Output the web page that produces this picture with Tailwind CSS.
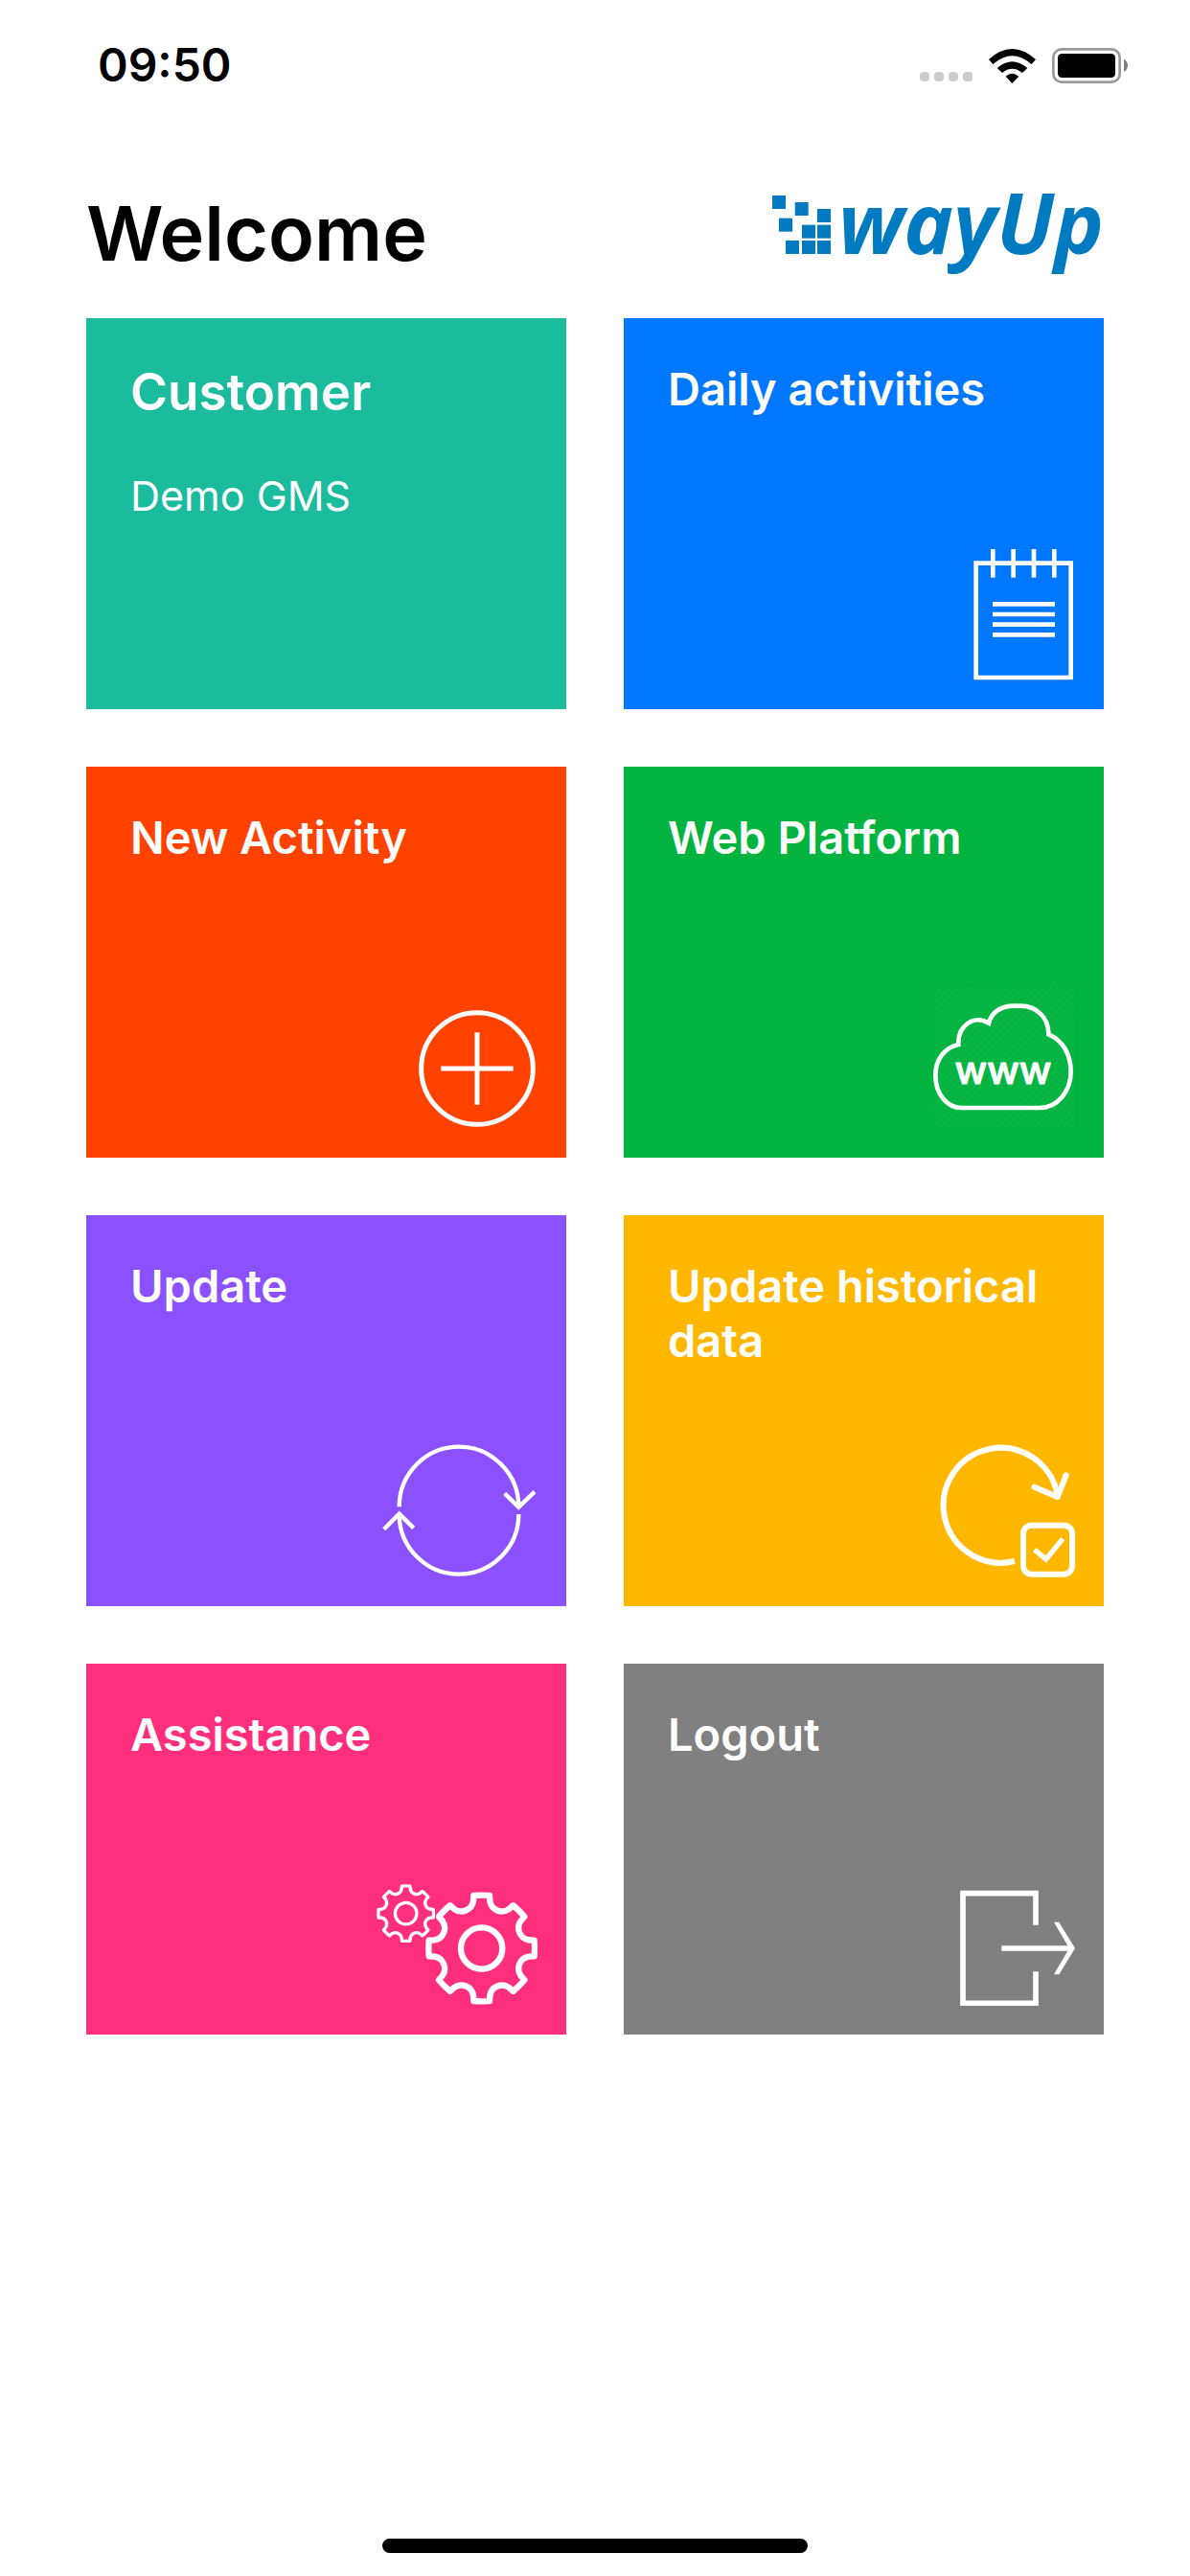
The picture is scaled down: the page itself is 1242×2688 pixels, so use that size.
<!DOCTYPE html>
<html lang="en">

<head>
    <meta charset="UTF-8">
    <meta name="viewport" content="width=device-width, initial-scale=1.0">
    <title>wayUp</title>
    <script src="https://cdn.jsdelivr.net/npm/@tailwindcss/browser@4"></script>
</head>

<body class="bg-white text-black font-['Inter',sans-serif] min-h-screen flex flex-col">

<!-- Status bar -->
<div class="flex items-center justify-between pt-10 pl-[102px] pr-[65px]">
    <span class="text-[48px] leading-[56px] font-semibold">09:50</span>
    <div class="flex items-end gap-[17px]">
        <div class="flex gap-[5px] pb-[2px]">
            <span class="size-[10px] rounded-[4px] bg-[#cccccc]"></span>
            <span class="size-[10px] rounded-[4px] bg-[#cccccc]"></span>
            <span class="size-[10px] rounded-[4px] bg-[#cccccc]"></span>
            <span class="size-[10px] rounded-[4px] bg-[#cccccc]"></span>
        </div>
        <svg class="w-[49px] h-[36px]" viewBox="276 57 147 108">
            <path d="M276 90 Q349 24 423 90 L410 105 Q349 52 289 105Z"/>
            <path d="M302 117 Q349 76 397 117L381 132 Q349 106 318 132Z"/>
            <path d="M329 143 Q349 126 370 143 L349 165Z"/>
        </svg>
        <svg class="w-[79px] h-[37px]" viewBox="474 57 237 111">
            <rect x="478" y="61" width="208" height="103" rx="26" fill="none" stroke="#999999" stroke-width="8"/>
            <rect x="492" y="75" width="180" height="75" rx="13"/>
            <path d="M699 92 Q711 98 711 112 Q711 126 699 132Z" fill="#808080"/>
        </svg>
    </div>
</div>

<!-- Header -->
<header class="flex items-center justify-between mt-[99px] px-[90px]">
    <h1 class="text-[79px] leading-[96px] font-semibold">Welcome</h1>
    <a href="#" class="flex items-baseline self-start gap-2 mt-[6px] text-[#007ac0]">
        <svg class="size-[61px]" viewBox="81 72 183 183" fill="currentColor">
            <rect x="81" y="72" width="42" height="42"/>
            <rect x="152" y="93" width="42" height="42"/>
            <rect x="222" y="114" width="42" height="42"/>
            <rect x="102" y="143" width="42" height="42"/>
            <rect x="174" y="164" width="42" height="42"/>
            <rect x="222" y="164" width="42" height="42"/>
            <rect x="123" y="213" width="42" height="42"/>
            <rect x="174" y="213" width="42" height="42"/>
            <rect x="222" y="213" width="42" height="42"/>
        </svg>
        <span class="font-['Open_Sans',sans-serif] text-[87px] leading-[61px] font-bold italic">wayUp</span>
    </a>
</header>

<!-- Tiles -->
<main class="grid grid-cols-2 gap-[60px] mt-[41px] px-[90px] text-white text-[47px] leading-[57px] font-semibold">

    <section class="flex flex-col gap-[50px] min-h-[408px] pt-[45px] pr-[30px] pb-[30px] pl-[46px] bg-[#1bbb9e]">
        <h2 class="text-[53px] leading-[64px]">Customer</h2>
        <p class="text-[43px] leading-[52px] font-normal">Demo GMS</p>
    </section>

    <a href="#" class="flex flex-col justify-between min-h-[408px] pt-[45px] pr-[30px] pb-[30px] pl-[46px] bg-[#0077ff]">
        <h2>Daily activities</h2>
        <svg class="self-end w-[107px] h-[138px]" viewBox="75 66 321 414" fill="none" stroke="currentColor" stroke-width="14">
            <path d="M86 113H383V471H86Z"/>
            <path d="M139 69V158M203 69V158M267 69V158M331 69V158"/>
            <path d="M138 241H333M138 273H333M138 305H333M138 337H333"/>
        </svg>
    </a>

    <a href="#" class="flex flex-col justify-between min-h-[408px] pt-[45px] pr-[30px] pb-[30px] pl-[46px] bg-[#ff4200]">
        <h2>New Activity</h2>
        <svg class="self-end size-[126px]" viewBox="105 66 378 378" fill="none" stroke="currentColor" stroke-width="15">
            <circle cx="294" cy="255" r="175"/>
            <path d="M181 255H407M294 142V368"/>
        </svg>
    </a>

    <a href="#" class="flex flex-col justify-between min-h-[408px] pt-[45px] pr-[30px] pb-[30px] pl-[46px] bg-[#03b33f]">
        <h2>Web Platform</h2>
        <svg class="self-end size-[150px]" viewBox="66 54 450 450" fill="none">
            <pattern id="hatch" width="16" height="16" patternUnits="userSpaceOnUse" patternTransform="rotate(45)">
                <rect width="8" height="16" fill="white" fill-opacity="0.03"/>
            </pattern>
            <rect x="72" y="60" width="440" height="440" fill="url(#hatch)"/>
            <path d="M160 438H405C462 438 503 385 503 325C503 268 475 225 433 208C434 158 398 119 345 119H325C285 119 255 138 246 173C200 145 148 180 151 240C105 250 79 290 79 335C79 395 115 438 160 438Z" stroke="currentColor" stroke-width="14"/>
            <text x="291" y="362" text-anchor="middle" font-size="122" font-weight="500" fill="currentColor" stroke="currentColor" stroke-width="3" stroke-linejoin="round">www</text>
        </svg>
    </a>

    <a href="#" class="flex flex-col justify-between min-h-[408px] pt-[45px] pr-[30px] pb-[30px] pl-[46px] bg-[#8b51ff]">
        <h2>Update</h2>
        <svg class="self-end w-[163px] h-[141px]" viewBox="54 75 489 423" fill="none" stroke="currentColor" stroke-width="13">
            <path d="M110 277A187 188 0 0 1 484 277"/>
            <path d="M484 300A187 188 0 0 1 110 300"/>
            <path d="M440 235L484 278L534 230"/>
            <path d="M62 347L110 299L155 343"/>
        </svg>
    </a>

    <a href="#" class="flex flex-col justify-between min-h-[408px] pt-[45px] pr-[30px] pb-[30px] pl-[46px] bg-[#ffb700]">
        <h2>Update historical data</h2>
        <svg class="self-end w-[142px] h-[140px]" viewBox="90 78 426 420" fill="none" stroke="currentColor" stroke-width="18">
            <path d="M327 447A180 180 0 1 1 461 240"/>
            <path d="M389 215L461 246L488 178" stroke-linecap="round" stroke-linejoin="round"/>
            <rect x="354" y="335" width="153" height="153" rx="26"/>
            <path d="M389 411L425 441L478 377" stroke-width="16"/>
        </svg>
    </a>

    <a href="#" class="flex flex-col justify-between min-h-[387px] pt-[45px] pr-[30px] pb-[30px] pl-[46px] bg-[#ff2f7e]">
        <h2>Assistance</h2>
        <svg class="self-end w-[170px] h-[129px]" viewBox="63 72 510 387" fill="none" stroke="currentColor" stroke-width="19" stroke-linecap="round" stroke-linejoin="round">
            <defs>
                <path id="tooth" d="M-26-148L-25-165Q0-167 25-165L26-148A38 38 0 0 0 86-123"/>
                <g id="gear">
                    <circle r="65"/>
                    <use href="#tooth"/>
                    <use href="#tooth" transform="rotate(45)"/>
                    <use href="#tooth" transform="rotate(90)"/>
                    <use href="#tooth" transform="rotate(135)"/>
                    <use href="#tooth" transform="rotate(180)"/>
                    <use href="#tooth" transform="rotate(225)"/>
                    <use href="#tooth" transform="rotate(270)"/>
                    <use href="#tooth" transform="rotate(315)"/>
                </g>
            </defs>
            <use href="#gear" transform="translate(398 279)"/>
            <use href="#gear" transform="translate(161 170) scale(0.52)"/>
        </svg>
    </a>

    <a href="#" class="flex flex-col justify-between min-h-[387px] pt-[45px] pr-[30px] pb-[30px] pl-[46px] bg-[#808080]">
        <h2>Logout</h2>
        <svg class="self-end size-[122px]" viewBox="90 93 366 366" fill="none" stroke="currentColor" stroke-width="17">
            <path d="M333 206V107H105V451H333V352M226 279H445"/>
            <path d="M390 197H406L456 279L406 361H390L438 279Z" fill="currentColor" stroke="none"/>
        </svg>
    </a>

</main>

<!-- Home indicator -->
<div class="mt-auto mx-auto mb-6 w-[444px] h-[15px] rounded-full bg-black"></div>

</body>

</html>
